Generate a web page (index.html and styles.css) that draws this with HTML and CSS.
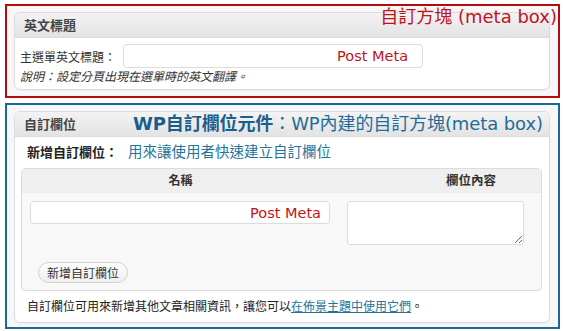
FILE: index.html
```html
<!DOCTYPE html>
<html lang="zh-Hant">
<head>
    <meta charset="UTF-8">
    <meta name="viewport" content="width=device-width, initial-scale=1.0">
    <title>自訂方塊 (meta box)</title>
    <link rel="stylesheet" href="styles.css">
</head>
<body>
    <div class="frame frame-red">
        <div class="note note-red">自訂方塊 (meta box)</div>
        <div class="metabox">
            <div class="box-head">英文標題</div>
            <div class="box-body box-body-top">
                <div class="field-row">
                    <label class="field-label">主選單英文標題：</label>
                    <input class="text-input input-title" type="text" value="Post Meta">
                </div>
                <p class="desc">說明：設定分頁出現在選單時的英文翻譯。</p>
            </div>
        </div>
    </div>

    <div class="frame frame-blue">
        <div class="note note-blue"><b>WP自訂欄位元件</b>：WP內建的自訂方塊(meta box)</div>
        <div class="metabox">
            <div class="box-head">自訂欄位</div>
            <div class="box-body box-body-bottom">
                <div class="add-title">新增自訂欄位：<span class="add-hint">用來讓使用者快速建立自訂欄位</span></div>
                <div class="cf-table">
                    <div class="cf-head">
                        <div class="cf-th cf-th-name">名稱</div>
                        <div class="cf-th cf-th-value">欄位內容</div>
                    </div>
                    <div class="cf-row">
                        <div class="cf-cell">
                            <input class="text-input input-key" type="text" value="Post Meta">
                        </div>
                        <div class="cf-cell">
                            <textarea class="cf-value"></textarea>
                        </div>
                    </div>
                    <div class="cf-actions">
                        <button class="btn-pill" type="button">新增自訂欄位</button>
                    </div>
                </div>
                <p class="foot">自訂欄位可用來新增其他文章相關資訊，讓您可以<a href="#">在佈景主題中使用它們</a>。</p>
            </div>
        </div>
    </div>
</body>
</html>
```

FILE: styles.css
```css
* {
    margin: 0;
    padding: 0;
    box-sizing: border-box;
}

body {
    background: #fff;
    padding: 4px 0 0 5px;
    font-family: "DejaVu Sans", "Noto Sans CJK TC", sans-serif;
    font-size: 12px;
    color: #333;
}

.frame {
    position: relative;
    width: 555px;
    background: #f7f7f7;
}

.frame-red {
    border: 2px solid #b20c0c;
    padding: 6px 8px 6px 7px;
}

.frame-blue {
    margin-top: 5px;
    border: 2px solid #1b6898;
    padding: 6px 8px 4px 7px;
}

/* annotations over the screenshot */
.note {
    position: absolute;
    white-space: nowrap;
    z-index: 2;
}

.note-red {
    top: 0;
    right: 1px;
    font-size: 18px;
    line-height: 22px;
    color: #c0141c;
}

.note-blue {
    top: 7px;
    left: 126px;
    font-size: 18px;
    line-height: 24px;
    letter-spacing: -0.1px;
    color: #1f6c98;
}

.note-blue b {
    color: #1a5f8c;
}

/* meta box */
.metabox {
    background: #fff;
    border: 1px solid #dcdcdc;
    border-radius: 6px;
    box-shadow: 0 1px 1px rgba(0, 0, 0, 0.04);
    overflow: hidden;
}

.box-head {
    height: 25px;
    line-height: 25px;
    padding-left: 9px;
    border-bottom: 1px solid #dcdcdc;
    background: linear-gradient(#f3f3f3, #e3e3e3);
    font-size: 13px;
    font-weight: 700;
    color: #444;
}

.box-body-top {
    padding: 6px 5px 4px;
}

.field-row {
    display: flex;
    align-items: center;
    gap: 7px;
}

.field-label {
    font-size: 12px;
    color: #333;
}

.text-input {
    height: 24px;
    border: 1px solid #dcdcdc;
    border-radius: 4px;
    background: #fff;
    font-family: "DejaVu Sans", sans-serif;
    font-size: 14.5px;
    color: #c0141c;
    text-align: right;
    outline: none;
}

.input-title {
    width: 300px;
    padding-right: 14px;
}

.desc {
    margin-top: 1px;
    line-height: 16px;
    font-style: italic;
    color: #333;
}

/* custom fields */
.box-body-bottom {
    padding: 7px 7px 7px 6px;
}

.add-title {
    padding-left: 6px;
    line-height: 16px;
    font-size: 13px;
    font-weight: 700;
    color: #222;
}

.add-hint {
    margin-left: 10px;
    font-size: 14.5px;
    font-weight: 400;
    color: #21759b;
}

.cf-table {
    margin-top: 7px;
    border: 1px solid #dcdcdc;
    border-radius: 4px;
    background: #f8f8f8;
}

.cf-head {
    display: grid;
    grid-template-columns: 317px 1fr;
    height: 24px;
    background: #efefef;
    border-bottom: 1px solid #ececec;
}

.cf-th {
    line-height: 24px;
    font-weight: 700;
    color: #333;
}

.cf-th-name {
    text-align: center;
}

.cf-th-value {
    text-align: right;
    padding-right: 45px;
    font-size: 12.5px;
}

.cf-row {
    display: grid;
    grid-template-columns: 317px 1fr;
    padding-top: 8px;
}

.cf-cell {
    padding-left: 8px;
}

.input-key {
    width: 300px;
    height: 23px;
    padding-right: 8px;
}

.cf-value {
    display: block;
    width: 177px;
    height: 44px;
    border: 1px solid #dcdcdc;
    border-radius: 3px;
    background: #fff;
    resize: both;
}

.cf-actions {
    padding: 17px 0 7px 16px;
}

.btn-pill {
    width: 90px;
    height: 21px;
    border: 1px solid #d2d2d2;
    border-radius: 11px;
    background: linear-gradient(#fdfdfd, #efefef);
    font-family: "Noto Sans CJK TC", sans-serif;
    font-size: 12px;
    line-height: 19px;
    color: #333;
}

.foot {
    margin-top: 8px;
    padding-left: 6px;
    line-height: 16px;
    color: #222;
}

.foot a {
    color: #21759b;
    text-decoration: underline;
}
```
